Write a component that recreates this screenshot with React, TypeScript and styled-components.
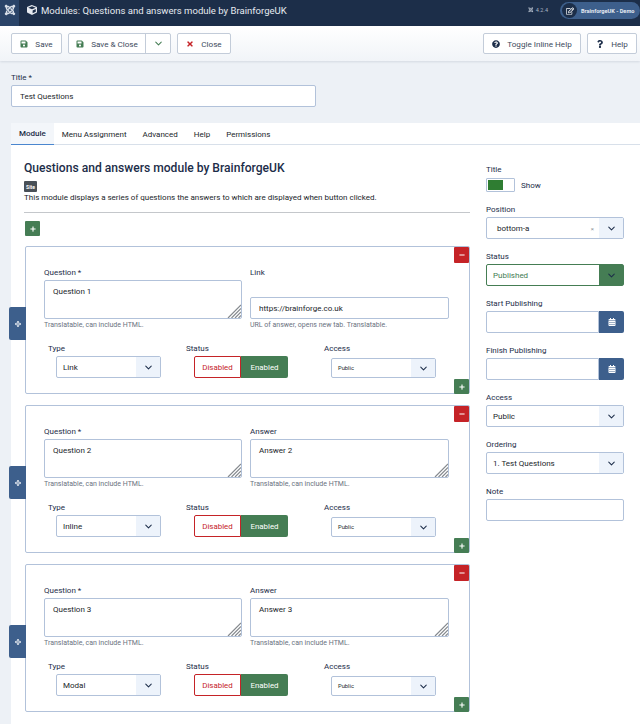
import React from 'react'
import styled, { createGlobalStyle } from 'styled-components'
import { ChevronDown } from 'lucide-react'
import {
  FaArrowsAlt, FaCalendarAlt, FaCube, FaJoomla, FaMinus, FaPlus,
  FaQuestion, FaQuestionCircle, FaRegEdit, FaSave, FaTimes,
} from 'react-icons/fa'

const GlobalStyle = createGlobalStyle`
  html, body {
    margin: 0;
    padding: 0;
    height: 724px;
    overflow: hidden;
    background: #edf1f6;
    font-family: Roboto, "Noto Sans", sans-serif;
    color: #1c2d49;
  }
  * { box-sizing: border-box; }
`

const Header = styled.header`
  display: flex;
  align-items: flex-start;
  height: 26px;
  background: #1c2e49;
  color: #fff;
`

const LogoBlock = styled.div`
  display: flex;
  align-items: center;
  justify-content: center;
  width: 19px;
  height: 26px;
  padding-bottom: 6px;
  background: #2a4468;
  font-size: 12px;
  color: #d8dfe8;
`

const PageTitle = styled.h1`
  display: flex;
  align-items: center;
  gap: 4px;
  height: 20px;
  margin: 0 0 0 8px;
  font-size: 9.55px;
  font-weight: 400;
  color: #e6eaf0;
  flex: 1;
  svg { font-size: 10px; }
`

const Version = styled.span`
  display: flex;
  align-items: center;
  gap: 2px;
  height: 20px;
  font-size: 5.5px;
  color: #aab4c2;
  margin-right: 12px;
`

const SitePill = styled.div`
  display: flex;
  align-items: center;
  gap: 4px;
  width: 80px;
  height: 17px;
  margin-top: 2px;
  padding-left: 2px;
  border-radius: 9px;
  background: #3d5f8c;
  font-size: 5.6px;
  font-weight: 700;
  color: #e6ebf2;
  white-space: nowrap;
`

const PillIcon = styled.span`
  display: flex;
  align-items: center;
  justify-content: center;
  width: 15px;
  height: 15px;
  flex: none;
  border-radius: 50%;
  background: #1c2e49;
  font-size: 8px;
  color: #fff;
`

const Toolbar = styled.div`
  display: flex;
  align-items: center;
  gap: 6px;
  height: 35px;
  padding: 0 3px 0 11px;
  background: linear-gradient(#fff, #f1f4f8);
  box-shadow: 0 1px 2px rgba(40, 60, 90, 0.12);
`

const ToolButton = styled.div<{ $w: number; $push?: boolean }>`
  display: flex;
  align-items: center;
  justify-content: center;
  gap: 7px;
  width: ${(p) => p.$w}px;
  height: 21px;
  margin-left: ${(p) => (p.$push ? 'auto' : '0')};
  border: 1px solid #c3ccd9;
  border-radius: 2px;
  background: #fff;
  font-size: 8.1px;
  color: #3c4a5c;
`

const SplitButton = styled.div`
  display: flex;
  width: 103px;
  height: 21px;
  border: 1px solid #c3ccd9;
  border-radius: 2px;
  background: #fff;
`

const SplitMain = styled.div`
  display: flex;
  align-items: center;
  justify-content: center;
  gap: 7px;
  flex: 1;
  font-size: 8.1px;
  color: #3c4a5c;
  border-right: 1px solid #c3ccd9;
`

const SplitCaret = styled.div`
  display: flex;
  align-items: center;
  justify-content: center;
  width: 24px;
  color: #457d54;
`

const IconTint = styled.span<{ $c: string; $s?: number }>`
  display: inline-flex;
  color: ${(p) => p.$c};
  font-size: ${(p) => p.$s ?? 8}px;
`

const TitleSection = styled.section`
  padding: 12px 0 0 11px;
`

const Label = styled.label<{ $indent?: number }>`
  display: block;
  height: 9px;
  margin-left: ${(p) => p.$indent ?? 0}px;
  font-size: 8px;
  line-height: 9px;
  color: #1c2d49;
  white-space: nowrap;
`

const TextInput = styled.input<{ $w?: number; $h?: number }>`
  display: block;
  width: ${(p) => (p.$w ? `${p.$w}px` : '100%')};
  height: ${(p) => p.$h ?? 22}px;
  margin-top: 3px;
  padding: 0 8px;
  border: 1px solid #b2c2da;
  border-radius: 2px;
  background: #fff;
  font: 400 8px Roboto, sans-serif;
  color: #22262a;
  outline: none;
`

const Card = styled.main`
  display: flex;
  flex-direction: column;
  margin: 16px 0 0 11px;
  height: 601px;
  background: #fff;
`

const Tabs = styled.nav`
  display: flex;
  height: 22px;
  border-bottom: 1px solid #d8e0ea;
`

const Tab = styled.div<{ $active?: boolean }>`
  display: flex;
  align-items: center;
  height: 22px;
  padding: 0 8px;
  font-size: 8px;
  font-weight: ${(p) => (p.$active ? 500 : 400)};
  color: ${(p) => (p.$active ? '#1c2d49' : '#22262a')};
  background: ${(p) => (p.$active ? '#f3f6fa' : 'transparent')};
  border-bottom: ${(p) => (p.$active ? '1px solid #4a86cf' : 'none')};
`

const Columns = styled.div`
  display: flex;
  padding: 0 16px 0 13px;
`

const Content = styled.div`
  width: 446px;
  flex: none;
`

const ModuleTitle = styled.h2`
  margin: 15px 0 0;
  font-size: 12.1px;
  line-height: 16px;
  font-weight: 500;
  color: #1c2d49;
  white-space: nowrap;
`

const SiteBadge = styled.span`
  display: flex;
  align-items: center;
  justify-content: center;
  width: 13px;
  height: 11px;
  margin-top: 5px;
  border-radius: 1px;
  background: #495057;
  color: #fff;
  font-size: 5px;
  font-weight: 700;
`

const Description = styled.p`
  margin: 0;
  font-size: 8px;
  line-height: 12px;
  color: #22262a;
  white-space: nowrap;
`

const Rule = styled.hr`
  margin: 8px 0;
  border: 0;
  border-top: 1px solid #c4c7cb;
`

const SquareButton = styled.div<{ $c: string; $h?: number }>`
  display: flex;
  align-items: center;
  justify-content: center;
  width: 15px;
  height: ${(p) => p.$h ?? 15}px;
  border-radius: 1px;
  background: ${(p) => p.$c};
  color: #fff;
  font-size: 6px;
`

const AddFirst = styled.div`
  margin-left: 1px;
`

const SubformList = styled.div`
  display: flex;
  flex-direction: column;
  gap: 11px;
  margin: 10px 0 0 1px;
`

const Subform = styled.div`
  position: relative;
  height: 148px;
  border: 1px solid #b2c2da;
  border-radius: 2px;
  padding: 21px 0 0 18px;
`

const RemoveSlot = styled.div`
  position: absolute;
  top: 0;
  right: 0;
`

const AddSlot = styled.div`
  position: absolute;
  right: 0;
  bottom: -1px;
`

const MoveHandle = styled.div`
  position: absolute;
  left: -17px;
  top: 60px;
  display: flex;
  align-items: center;
  justify-content: center;
  width: 17px;
  height: 33px;
  border-radius: 2px 0 0 2px;
  background: #3d5f8c;
  color: #fff;
  font-size: 6px;
`

const FieldRow = styled.div`
  display: grid;
  grid-template-columns: 198px 199px;
  column-gap: 8px;
`

const Field = styled.div`
  display: flex;
  flex-direction: column;
  height: 62px;
`

const AreaWrap = styled.div`
  position: relative;
  height: 39px;
  margin-top: 3px;
`

const Area = styled.textarea`
  display: block;
  width: 100%;
  height: 100%;
  padding: 5px 8px;
  border: 1px solid #b2c2da;
  border-radius: 2px;
  resize: none;
  background: #fff;
  font: 400 8px/12px Roboto, sans-serif;
  color: #22262a;
  outline: none;
`

const Grip = styled.svg`
  position: absolute;
  right: 1px;
  bottom: 1px;
`

const LinkInput = styled(TextInput)`
  margin-top: 20px;
`

const Hint = styled.small`
  display: block;
  margin-top: 2px;
  font-size: 7px;
  line-height: 9px;
  color: #6a7280;
  white-space: nowrap;
`

const OptionRow = styled.div`
  display: flex;
  margin-top: 14px;
`

const OptionCol = styled.div<{ $w: number; $indent: number }>`
  width: ${(p) => p.$w}px;
  padding-left: ${(p) => p.$indent}px;
`

const SelectBox = styled.div<{ $w?: number; $h?: number; $status?: boolean; $small?: boolean }>`
  display: flex;
  align-items: stretch;
  width: ${(p) => (p.$w ? `${p.$w}px` : '100%')};
  height: ${(p) => p.$h ?? 22}px;
  border: 1px solid ${(p) => (p.$status ? '#457d54' : '#b2c2da')};
  border-radius: 2px;
  background: #fff;
  font-size: ${(p) => (p.$small ? 5.8 : 8)}px;
  color: ${(p) => (p.$status ? '#457d54' : '#22262a')};
`

const SelectText = styled.span<{ $pad?: number }>`
  display: flex;
  align-items: center;
  flex: 1;
  padding-left: ${(p) => p.$pad ?? 6}px;
  white-space: nowrap;
`

const SelectClear = styled.span`
  display: flex;
  align-items: center;
  margin-right: 5px;
  font-size: 6px;
  color: #8a919b;
`

const SelectCaret = styled.span<{ $status?: boolean }>`
  display: flex;
  align-items: center;
  justify-content: center;
  width: 24px;
  background: ${(p) => (p.$status ? '#457d54' : '#edf3fb')};
  color: #1c2d49;
`

const Indented = styled.div`
  margin: 3px 0 0 8px;
`

const Switcher = styled.div`
  display: flex;
  margin: 3px 0 0 8px;
  width: 94px;
  height: 22px;
  font-size: 7.9px;
`

const SwitchSide = styled.div<{ $on?: boolean }>`
  display: flex;
  align-items: center;
  justify-content: center;
  width: 47px;
  border-radius: ${(p) => (p.$on ? '0 2px 2px 0' : '2px 0 0 2px')};
  border: ${(p) => (p.$on ? 'none' : '1px solid #c52327')};
  background: ${(p) => (p.$on ? '#457d54' : '#fff')};
  color: ${(p) => (p.$on ? '#fff' : '#c52327')};
`

const AccessSelect = styled.div`
  margin: 5px 0 0 7px;
`

const Sidebar = styled.aside`
  width: 138px;
  margin-left: 16px;
  padding-top: 20px;
`

const SideField = styled.div`
  margin-bottom: 13px;
`

const ToggleLine = styled.div`
  display: flex;
  align-items: center;
  gap: 6px;
  margin-top: 4px;
  font-size: 8px;
  color: #1c2d49;
`

const Toggle = styled.div`
  display: flex;
  width: 29px;
  height: 14px;
  padding: 1px;
  border: 1px solid #b2c2da;
  border-radius: 1px;
  background: #fff;
`

const ToggleFill = styled.span`
  width: 15px;
  background: #2f7d32;
`

const DateGroup = styled.div`
  display: flex;
  height: 22px;
  margin-top: 3px;
`

const DateInput = styled.input`
  flex: 1;
  min-width: 0;
  border: 1px solid #b2c2da;
  border-radius: 2px 0 0 2px;
  outline: none;
`

const DateButton = styled.div`
  display: flex;
  align-items: center;
  justify-content: center;
  width: 25px;
  border-radius: 0 2px 2px 0;
  background: #3d5f8c;
  color: #fff;
  font-size: 8px;
`

const SideSelect = styled.div`
  margin-top: 3px;
`

type Row = {
  question: string
  second: 'Link' | 'Answer'
  value: string
  secondHint: string
  type: string
}

const rows: Row[] = [
  { question: 'Question 1', second: 'Link', value: 'https://brainforge.co.uk', secondHint: 'URL of answer, opens new tab. Translatable.', type: 'Link' },
  { question: 'Question 2', second: 'Answer', value: 'Answer 2', secondHint: 'Translatable, can include HTML.', type: 'Inline' },
  { question: 'Question 3', second: 'Answer', value: 'Answer 3', secondHint: 'Translatable, can include HTML.', type: 'Modal' },
]

const ResizeGrip = () => (
  <Grip width="14" height="14" viewBox="0 0 14 14" stroke="#85898e" strokeWidth="1.2">
    <path d="M1 14 14 1M4.5 14 14 4.5M8 14 14 8M11.5 14 14 11.5" />
  </Grip>
)

const Select = ({ text, w, h, small, status, pad, clear }: {
  text: string; w?: number; h?: number; small?: boolean; status?: boolean; pad?: number; clear?: boolean
}) => (
  <SelectBox $w={w} $h={h} $small={small} $status={status}>
    <SelectText $pad={pad}>{text}</SelectText>
    {clear && <SelectClear>×</SelectClear>}
    <SelectCaret $status={status}><ChevronDown size={11} strokeWidth={2.2} /></SelectCaret>
  </SelectBox>
)

const QuestionRow = ({ row }: { row: Row }) => (
  <Subform>
    <RemoveSlot><SquareButton $c="#c52327" $h={16}><FaMinus /></SquareButton></RemoveSlot>
    <AddSlot><SquareButton $c="#457d54"><FaPlus /></SquareButton></AddSlot>
    <MoveHandle><FaArrowsAlt /></MoveHandle>
    <FieldRow>
      <Field>
        <Label>Question *</Label>
        <AreaWrap>
          <Area readOnly defaultValue={row.question} />
          <ResizeGrip />
        </AreaWrap>
        <Hint>Translatable, can include HTML.</Hint>
      </Field>
      <Field>
        <Label>{row.second}</Label>
        {row.second === 'Link' ? (
          <LinkInput readOnly defaultValue={row.value} />
        ) : (
          <AreaWrap>
            <Area readOnly defaultValue={row.value} />
            <ResizeGrip />
          </AreaWrap>
        )}
        <Hint>{row.secondHint}</Hint>
      </Field>
    </FieldRow>
    <OptionRow>
      <OptionCol $w={142} $indent={4}>
        <Label>Type</Label>
        <Indented><Select text={row.type} w={105} /></Indented>
      </OptionCol>
      <OptionCol $w={138} $indent={0}>
        <Label>Status</Label>
        <Switcher>
          <SwitchSide>Disabled</SwitchSide>
          <SwitchSide $on>Enabled</SwitchSide>
        </Switcher>
      </OptionCol>
      <OptionCol $w={120} $indent={0}>
        <Label>Access</Label>
        <AccessSelect><Select text="Public" w={105} h={20} small /></AccessSelect>
      </OptionCol>
    </OptionRow>
  </Subform>
)

export default function App() {
  return (
    <>
      <GlobalStyle />
      <Header>
        <LogoBlock><FaJoomla /></LogoBlock>
        <PageTitle><FaCube />Modules: Questions and answers module by BrainforgeUK</PageTitle>
        <Version><FaJoomla />4.2.4</Version>
        <SitePill>
          <PillIcon><FaRegEdit /></PillIcon>
          BrainforgeUK - Demo
        </SitePill>
      </Header>
      <Toolbar>
        <ToolButton $w={51}><IconTint $c="#457d54"><FaSave /></IconTint>Save</ToolButton>
        <SplitButton>
          <SplitMain><IconTint $c="#457d54"><FaSave /></IconTint>Save &amp; Close</SplitMain>
          <SplitCaret><ChevronDown size={11} strokeWidth={2.2} /></SplitCaret>
        </SplitButton>
        <ToolButton $w={54}><IconTint $c="#c52327"><FaTimes /></IconTint>Close</ToolButton>
        <ToolButton $w={98} $push><IconTint $c="#1c2d49"><FaQuestionCircle /></IconTint>Toggle Inline Help</ToolButton>
        <ToolButton $w={50}><IconTint $c="#1c2d49"><FaQuestion /></IconTint>Help</ToolButton>
      </Toolbar>
      <TitleSection>
        <Label>Title *</Label>
        <TextInput $w={305} readOnly defaultValue="Test Questions" />
      </TitleSection>
      <Card>
        <Tabs>
          <Tab $active>Module</Tab>
          <Tab>Menu Assignment</Tab>
          <Tab>Advanced</Tab>
          <Tab>Help</Tab>
          <Tab>Permissions</Tab>
        </Tabs>
        <Columns>
          <Content>
            <ModuleTitle>Questions and answers module by BrainforgeUK</ModuleTitle>
            <SiteBadge>Site</SiteBadge>
            <Description>This module displays a series of questions the answers to which are displayed when button clicked.</Description>
            <Rule />
            <AddFirst><SquareButton $c="#457d54"><FaPlus /></SquareButton></AddFirst>
            <SubformList>
              {rows.map((row) => <QuestionRow key={row.question} row={row} />)}
            </SubformList>
          </Content>
          <Sidebar>
            <SideField>
              <Label>Title</Label>
              <ToggleLine><Toggle><ToggleFill /></Toggle>Show</ToggleLine>
            </SideField>
            <SideField>
              <Label>Position</Label>
              <SideSelect><Select text="bottom-a" pad={10} clear /></SideSelect>
            </SideField>
            <SideField>
              <Label>Status</Label>
              <SideSelect><Select text="Published" status /></SideSelect>
            </SideField>
            <SideField>
              <Label>Start Publishing</Label>
              <DateGroup><DateInput readOnly /><DateButton><FaCalendarAlt /></DateButton></DateGroup>
            </SideField>
            <SideField>
              <Label>Finish Publishing</Label>
              <DateGroup><DateInput readOnly /><DateButton><FaCalendarAlt /></DateButton></DateGroup>
            </SideField>
            <SideField>
              <Label>Access</Label>
              <SideSelect><Select text="Public" /></SideSelect>
            </SideField>
            <SideField>
              <Label>Ordering</Label>
              <SideSelect><Select text="1. Test Questions" /></SideSelect>
            </SideField>
            <SideField>
              <Label>Note</Label>
              <TextInput />
            </SideField>
          </Sidebar>
        </Columns>
      </Card>
    </>
  )
}
